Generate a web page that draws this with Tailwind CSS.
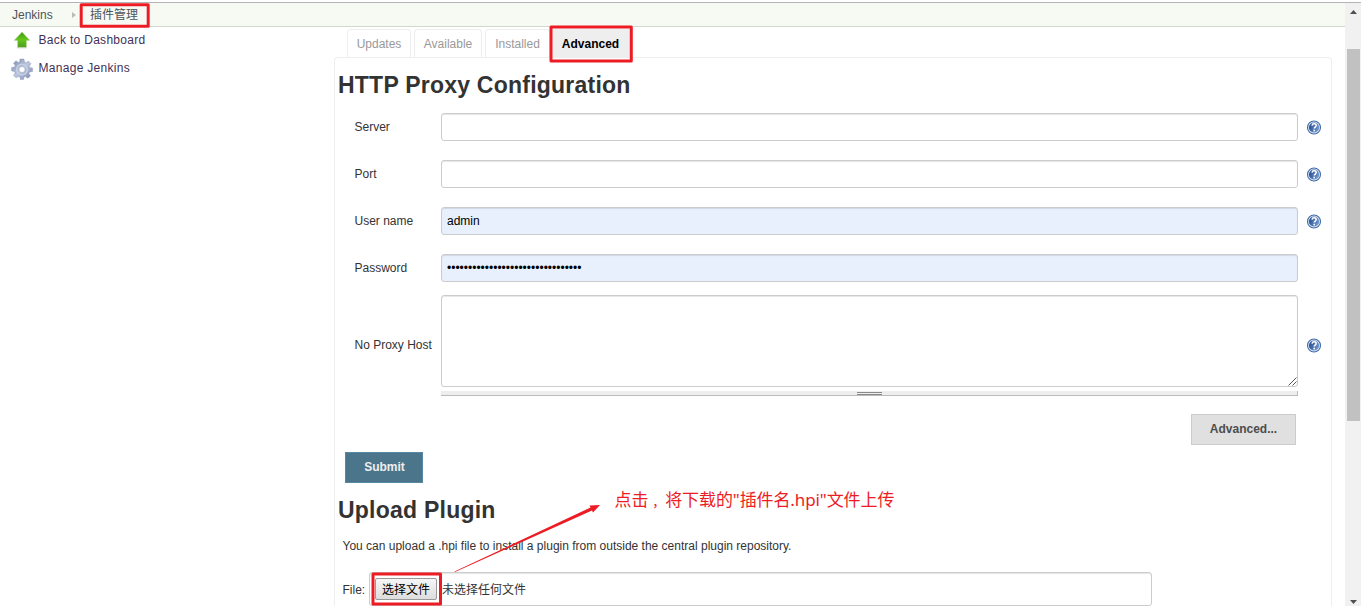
<!DOCTYPE html>
<html lang="zh-CN">
<head>
<meta charset="utf-8">
<title>Jenkins</title>
<script src="https://cdn.jsdelivr.net/npm/@tailwindcss/browser@4"></script>
</head>
<body class="relative flex h-[606px] w-[1361px] flex-col overflow-hidden bg-white font-['Liberation_Sans','Noto_Sans_CJK_SC',sans-serif] text-[12px] leading-4 text-[#333]">
<svg class="absolute h-0 w-0">
  <defs>
    <linearGradient id="blue" x1="0" y1="0" x2="1" y2="0.3"><stop offset="0" stop-color="#1f4a8f"/><stop offset="1" stop-color="#6c93c8"/></linearGradient>
    <linearGradient id="green" x1="0" y1="0" x2="0" y2="1"><stop offset="0" stop-color="#3f9a0c"/><stop offset="0.5" stop-color="#66c61c"/><stop offset="1" stop-color="#4c9d18"/></linearGradient>
    <linearGradient id="steel" x1="0" y1="0" x2="1" y2="1"><stop offset="0" stop-color="#7889ae"/><stop offset="0.5" stop-color="#bcc6de"/><stop offset="1" stop-color="#7486ae"/></linearGradient>
    <symbol id="help" viewBox="0 0 16 16">
      <circle cx="8" cy="8.500" r="6.500" fill="#dce6f3" stroke="#416ba8" stroke-width="1.1"/>
      <circle cx="8" cy="8.500" r="5.1" fill="url(#blue)"/>
      <path d="M6 6.6C6.200 5.3 7 4.800 8.1 4.800c1.2 0 2.1.7 2.1 1.7 0 1.500-2 1.600-2 3.1" fill="none" stroke="#fff" stroke-width="1.5"/>
      <rect x="7.4" y="10.7" width="1.6" height="1.7" fill="#fff"/>
    </symbol>
  </defs>
</svg>
<div class="h-[3px] shrink-0 border-b border-[#b3b3b8]"></div>
<div class="flex min-h-0 flex-1">
  <div class="flex min-w-0 flex-1 flex-col">
    <nav class="flex h-6 shrink-0 items-center border-b border-[#d3d7cf] bg-[#f6faf2] pl-3 text-[#4d545d]">
      <span class="w-[60px]">Jenkins</span>
      <svg class="mr-[14px] h-[6px] w-1" viewBox="0 0 4 6"><path d="M0 0L4 3L0 6Z" fill="#bbb"/></svg>
      <span>插件管理</span>
    </nav>
    <div class="flex min-h-0 flex-1">
      <aside class="flex w-[334px] shrink-0 flex-col pt-1 pl-[11px] text-[#3f3058]">
        <a class="flex h-[18px] items-center gap-[5.500px] tracking-[0.29px]">
          <svg class="h-[22px] w-[22px]" viewBox="0 0 22 22"><path d="M11 3.200L18.500 11.2H15.2V18.2H6.8V11.2H3.500Z" fill="url(#green)" stroke="#6fb544" stroke-width=".5"/><path d="M6 18.8H16" stroke="#c3cbbb"/></svg><span class="pb-px">Back to Dashboard</span></a>
        <a class="mt-[10px] flex h-[18px] items-center gap-[5.500px] tracking-[0.29px]">
          <svg class="mt-[2px] h-[22px] w-[22px] shrink-0" viewBox="0 0 22 22"><path fill="url(#steel)" stroke="#8592b0" stroke-width=".4" fill-rule="evenodd" d="M9 1H13L13.5 4L15 4.7L17.5 3L20 5.7L18.2 8.2L18.8 9.5L21.5 10V13.5L18.5 14L17.9 15.4L19.4 18L16.8 20.3L14.3 18.6L13 19L12.5 21.5H9.4L8.8 19L7.3 18.4L5 19.8L2.5 17.4L4.1 15L3.5 13.5L.6 13V9.6L3.5 9L4.2 7.6L2.5 5.2L5 2.8L7.4 4.5L8.6 4Z M11 8.500A3 3 0 1 0 11 14.500A3 3 0 1 0 11 8.500Z"/><circle cx="11" cy="11.5" r="5.3" fill="none" stroke="#c6cfe4" stroke-width="1.6"/></svg><span class="pb-px">Manage Jenkins</span></a>
      </aside>
      <main class="flex w-[998px] shrink-0 flex-col">
        <div class="flex h-[30px] shrink-0 items-end pl-[13px] text-[#999]">
          <a class="mr-[3px] flex h-7 w-16 items-center justify-center rounded-t border border-b-0 border-[#eee]">Updates</a>
          <a class="mr-[3px] flex h-7 w-[68px] items-center justify-center rounded-t border border-b-0 border-[#eee]">Available</a>
          <a class="flex h-7 w-[65px] items-center justify-center rounded-t border border-b-0 border-[#eee]">Installed</a>
          <a class="flex h-7 w-[81px] items-center justify-center bg-[#eee] pt-px font-bold text-black">Advanced</a>
        </div>
        <section class="min-h-0 flex-1 overflow-hidden rounded-t border border-b-0 border-[#eee]">
          <h1 class="ml-[3px] mt-3 h-[43px] text-[23px] leading-[30px] font-bold tracking-[0.23px]">HTTP Proxy Configuration</h1>
          <div class="flex h-7 items-center pl-[19.500px]"><span class="w-[86.500px]">Server</span><div class="h-7 w-[857px] rounded-[3px] border border-[#ccc] shadow-[inset_0_1px_1px_rgba(0,0,0,.1)]"></div><svg class="ml-2 h-4 w-4"><use href="#help"/></svg></div>
          <div class="mt-[19px] flex h-7 items-center pl-[19.500px]"><span class="w-[86.500px]">Port</span><div class="h-7 w-[857px] rounded-[3px] border border-[#ccc] shadow-[inset_0_1px_1px_rgba(0,0,0,.1)]"></div><svg class="ml-2 h-4 w-4"><use href="#help"/></svg></div>
          <div class="mt-[19px] flex h-7 items-center pl-[19.500px]"><span class="w-[86.500px]">User name</span><div class="flex h-7 w-[857px] items-center rounded-[3px] border border-[#ccc] bg-[#e8f0fe] pl-[5px] text-black shadow-[inset_0_1px_1px_rgba(0,0,0,.1)]">admin</div><svg class="ml-2 h-4 w-4"><use href="#help"/></svg></div>
          <div class="mt-[19px] flex h-7 items-center pl-[19.500px]"><span class="w-[86.500px]">Password</span><div class="flex h-7 w-[857px] items-center rounded-[3px] border border-[#ccc] bg-[#e8f0fe] pl-[5px] text-black shadow-[inset_0_1px_1px_rgba(0,0,0,.1)]">••••••••••••••••••••••••••••••••</div></div>
          <div class="mt-[13px] flex h-[101px] items-center pl-[19.500px]">
            <span class="w-[86.500px] pb-[2px]">No Proxy Host</span>
            <div class="flex h-[101px] w-[857px] flex-col">
              <div class="flex h-[92px] items-end justify-end rounded-[3px] border border-[#ccc] shadow-[inset_0_1px_1px_rgba(0,0,0,.1)]"><svg class="h-[9px] w-[9px]" viewBox="0 0 9 9"><path d="M.5 8.5L8.5 .5M4.5 8.5L8.5 4.5" stroke="#555"/></svg></div>
              <div class="mt-1 flex h-[5px] justify-center border-r border-b border-[#bbb] bg-[#eee]"><div class="mt-px h-[3px] w-[25px] border-y border-[#888]"></div></div>
            </div>
            <svg class="mb-px ml-2 h-4 w-4"><use href="#help"/></svg>
          </div>
          <div class="mt-[18px] flex justify-end pr-[35px]"><button class="h-[31px] w-[105px] border border-[#ccc] bg-[#e0e0e0] pb-[2px] font-bold text-[#4d4d4d]">Advanced...</button></div>
          <button class="mt-[7px] ml-[10px] block h-[31px] w-[78px] border border-[#5788a1] bg-[#4b758b] pb-px pl-px font-bold text-[#eee]">Submit</button>
          <h1 class="mt-3 ml-[3px] h-[43px] text-[23px] leading-[30px] font-bold tracking-[0.23px]">Upload Plugin</h1>
          <p class="ml-[7.500px]">You can upload a .hpi file to install a plugin from outside the central plugin repository.</p>
          <div class="mt-[18px] ml-[7.500px] flex h-[34px] items-center"><span class="w-[26.500px] pt-px">File:</span><div class="flex h-[34px] w-[783px] items-center rounded-[3px] border border-[#ccc] pl-[5px] shadow-[inset_0_1px_1px_rgba(0,0,0,.1)]"><button class="mr-[5px] h-[22px] w-[62px] rounded-[2px] border border-[#999] bg-gradient-to-b from-[#f6f6f6] to-[#ddd] pt-px leading-5 text-black">选择文件</button><span class="pt-[2px]">未选择任何文件</span></div></div>
        </section>
      </main>
    </div>
  </div>
  <div class="flex w-4 shrink-0 flex-col items-center bg-[#f1f1f1]">
    <svg class="mt-[7px] h-1 w-[7px]" viewBox="0 0 7 4"><path d="M3.5 0L7 4H0Z" fill="#505050"/></svg>
    <div class="mt-[35px] h-[372px] w-[13px] shrink-0 bg-[#c1c1c1]"></div>
    <svg class="mt-auto mb-[2px] h-1 w-[7px]" viewBox="0 0 7 4"><path d="M0 0H7L3.5 4Z" fill="#505050"/></svg>
  </div>
</div>
<!-- annotations over the page -->
<svg class="pointer-events-none absolute inset-0" width="1361" height="606">
  <g fill="none" stroke="#ed1c24" stroke-width="3" stroke-linejoin="round">
    <rect x="81.2" y="4.8" width="67" height="21.5"/>
    <rect x="551" y="27" width="80.3" height="34"/>
    <rect x="373" y="574" width="67.500" height="30"/>
  </g>
  <path d="M454.500 571.500L590.500 507.500L589.500 505.500L600 505L593 512.500L592 510.500L455 572Z" fill="#ed1c24"/>
</svg>
<div class="absolute top-[488px] left-[614.500px] text-[17px] leading-6 tracking-[-0.1px] whitespace-nowrap text-[#ed1c24] font-['Noto_Sans','Noto_Sans_CJK_SC',sans-serif]">点击<span class="ml-1 text-[13px]">，</span>将下载的"插件名.hpi"文件上传</div>
</body>
</html>
